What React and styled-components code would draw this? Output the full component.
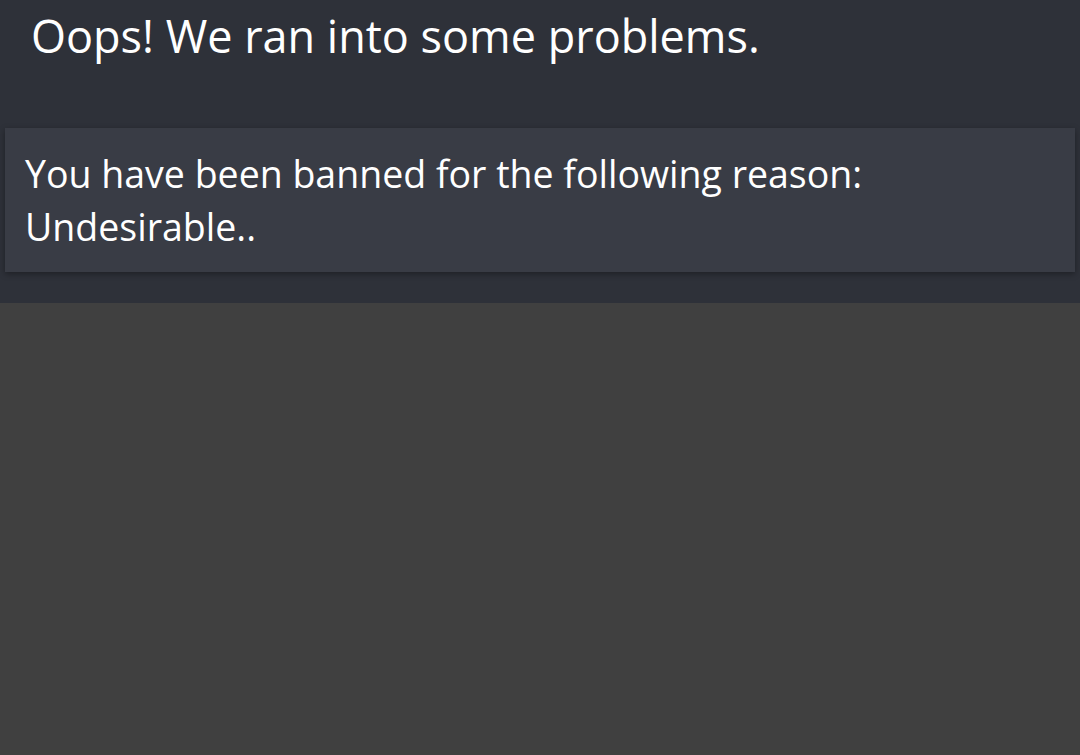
import React from "react";
import styled, { createGlobalStyle } from "styled-components";

const GlobalStyle = createGlobalStyle`
  html, body {
    margin: 0;
    padding: 0;
    height: 100%;
    background: #404040;
    font-family: "Open Sans", "Noto Sans", sans-serif;
    color: #ffffff;
  }
`;

const Header = styled.section`
  background: #2e3139;
  padding: 0 5px 31px;
`;

const Title = styled.h1`
  margin: 0;
  padding: 6px 26px 0;
  height: 128px;
  box-sizing: border-box;
  font-size: 45px;
  font-weight: 400;
  line-height: 60px;
`;

const Card = styled.div`
  background: #393c45;
  padding: 19px 20px 19px;
  height: 144px;
  box-sizing: border-box;
  box-shadow: 0 2px 6px rgba(0, 0, 0, 0.35);
  font-size: 37.5px;
  line-height: 53px;
`;

export default function App() {
  return (
    <>
      <GlobalStyle />
      <Header>
        <Title>Oops! We ran into some problems.</Title>
        <Card>
          You have been banned for the following reason:
          <br />
          Undesirable..
        </Card>
      </Header>
    </>
  );
}
